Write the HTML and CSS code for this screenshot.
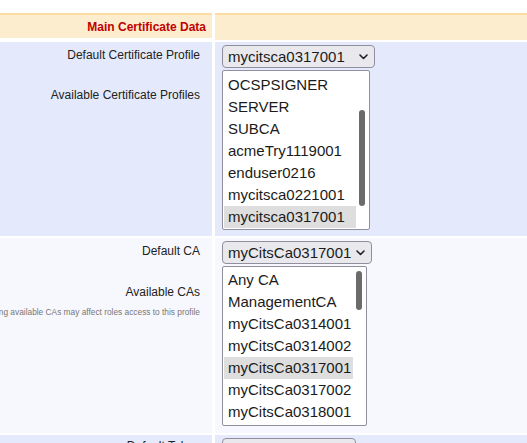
FILE: index.html
```html
<!DOCTYPE html>
<html>
<head>
<meta charset="utf-8">
<link rel="stylesheet" href="styles.css">
</head>
<body>
<div class="form">
  <div class="cell head-label">Main Certificate Data</div>
  <div class="cell head-value"></div>

  <div class="cell label row-a">
    <div class="lbl">Default Certificate Profile</div>
    <div class="lbl lbl-second">Available Certificate Profiles</div>
  </div>
  <div class="cell value row-a">
    <div class="select select-profile">
      <span class="select-text">mycitsca0317001</span>
      <svg class="chev" width="9" height="6" viewBox="0 0 9 6"><path d="M1 1 L4.5 4.5 L8 1" fill="none" stroke="#222" stroke-width="1.6" stroke-linecap="round" stroke-linejoin="round"/></svg>
    </div>
    <div class="listbox listbox-profile">
      <div class="opt">OCSPSIGNER</div>
      <div class="opt">SERVER</div>
      <div class="opt">SUBCA</div>
      <div class="opt">acmeTry1119001</div>
      <div class="opt">enduser0216</div>
      <div class="opt">mycitsca0221001</div>
      <div class="opt sel">mycitsca0317001</div>
      <div class="thumb thumb-profile"></div>
    </div>
  </div>

  <div class="cell label row-b">
    <div class="lbl">Default CA</div>
    <div class="lbl lbl-second-ca">Available CAs</div>
    <div class="help">Removing available CAs may affect roles access to this profile</div>
  </div>
  <div class="cell value row-b">
    <div class="select select-ca">
      <span class="select-text">myCitsCa0317001</span>
      <svg class="chev" width="9" height="6" viewBox="0 0 9 6"><path d="M1 1 L4.5 4.5 L8 1" fill="none" stroke="#222" stroke-width="1.6" stroke-linecap="round" stroke-linejoin="round"/></svg>
    </div>
    <div class="listbox listbox-ca">
      <div class="opt">Any CA</div>
      <div class="opt">ManagementCA</div>
      <div class="opt">myCitsCa0314001</div>
      <div class="opt">myCitsCa0314002</div>
      <div class="opt sel">myCitsCa0317001</div>
      <div class="opt">myCitsCa0317002</div>
      <div class="opt">myCitsCa0318001</div>
      <div class="thumb thumb-ca"></div>
    </div>
  </div>

  <div class="cell label label-token row-a">
    <div class="lbl">Default Token</div>
  </div>
  <div class="cell value row-a">
    <div class="select select-token">
      <span class="select-text">Key Pair Token</span>
      <svg class="chev" width="9" height="6" viewBox="0 0 9 6"><path d="M1 1 L4.5 4.5 L8 1" fill="none" stroke="#222" stroke-width="1.6" stroke-linecap="round" stroke-linejoin="round"/></svg>
    </div>
  </div>
</div>
</body>
</html>
```
FILE: styles.css
```css
html, body {
  margin: 0;
  padding: 0;
  background: #ffffff;
  overflow: hidden;
}

body {
  font-family: "Liberation Sans", Arial, sans-serif;
  color: #222222;
}

.form {
  display: grid;
  grid-template-columns: 212px 1fr;
  column-gap: 3px;
  row-gap: 2px;
  margin-top: 13px;
}

.cell {
  min-width: 0;
}

.head-label,
.head-value {
  background: #fdedcf;
  border-top: 2px solid #fcdca0;
  height: 25px;
}

.head-label {
  font-size: 12px;
  font-weight: bold;
  color: #c00000;
  text-align: right;
  line-height: 25px;
  padding-right: 6px;
  box-sizing: border-box;
}

.row-a {
  background: #e4eafc;
}

.row-b {
  background: #f7f8fe;
}

.label {
  padding: 6px 12px 0 0;
  font-size: 12px;
  line-height: 15px;
  text-align: right;
}

.label-token {
  padding-top: 4px;
}

.lbl-second {
  margin-top: 25px;
}

.lbl-second-ca {
  margin-top: 26px;
}

.help {
  display: flex;
  justify-content: flex-end;
  white-space: nowrap;
  font-size: 8.33px;
  line-height: 10px;
  color: #777777;
  margin-top: 7px;
}

.value {
  padding: 3px 7px 6px 7px;
}

.row-b.value {
  padding-bottom: 7px;
}

.select {
  box-sizing: border-box;
  height: 23px;
  display: flex;
  align-items: center;
  justify-content: space-between;
  padding: 0 6px 0 5px;
  border: 1px solid #8f8f9d;
  border-radius: 4px;
  background: #e9e9ed;
  font-size: 15px;
  color: #1b1b1b;
}

.select-profile {
  width: 153px;
}

.select-ca {
  width: 150px;
}

.select-token {
  width: 134px;
}

.chev {
  display: block;
}

.listbox {
  position: relative;
  box-sizing: border-box;
  height: 160px;
  margin-top: 2px;
  border: 1px solid #8f8f9d;
  border-radius: 2px;
  background: #ffffff;
  padding: 3px 13px 1px 1px;
  overflow: hidden;
}

.listbox-profile {
  width: 148px;
  padding-top: 3px;
}

.listbox-ca {
  width: 145px;
  padding-top: 2px;
}

.opt {
  height: 22px;
  line-height: 22px;
  padding-left: 4px;
  font-size: 15px;
  color: #1b1b1b;
  white-space: nowrap;
}

.opt.sel {
  background: #dedede;
}

.thumb {
  position: absolute;
  right: 4px;
  width: 6px;
  border-radius: 3px;
  background: #6b6b6b;
}

.thumb-profile {
  top: 39px;
  height: 96px;
}

.thumb-ca {
  top: 4px;
  height: 39px;
}
```
